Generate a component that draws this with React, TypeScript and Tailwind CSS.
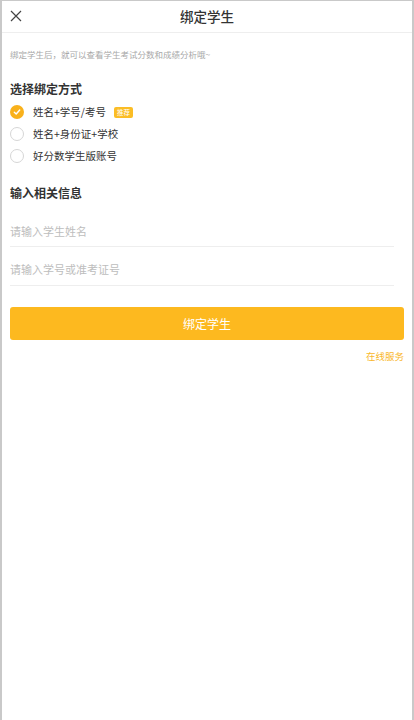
import { useState } from 'react';

const options = ['姓名+学号/考号', '姓名+身份证+学校', '好分数学生版账号'];

export default function App() {
  const [selected, setSelected] = useState(0);

  return (
    <div
      className="min-h-[720px] bg-white border-x-2 border-t border-[#c9c9c9] text-[#333]"
      style={{ fontFamily: '"Noto Sans CJK SC", "Noto Sans", sans-serif' }}
    >
      {/* Header */}
      <div className="relative h-[32px] flex items-center justify-center border-b border-[#eeeeee]">
        <button className="absolute left-[7px] top-[8px] w-[14px] h-[14px] flex items-center justify-center">
          <svg width="12" height="12" viewBox="0 0 12 12" fill="none" stroke="#444" strokeWidth="1.2">
            <path d="M1 1 L11 11 M11 1 L1 11" />
          </svg>
        </button>
        <h1 className="text-[13.5px] font-medium text-[#333] leading-none">绑定学生</h1>
      </div>

      <div className="px-[8px]">
        <p className="mt-[14px] text-[8.5px] text-[#a8a8a8] leading-[14px]">
          绑定学生后，就可以查看学生考试分数和成绩分析哦~
        </p>

        {/* Binding method */}
        <h2 className="mt-[20px] text-[12px] font-bold text-[#333] leading-[16px]">选择绑定方式</h2>
        <div className="mt-[7px] flex flex-col gap-[6px]">
          {options.map((label, i) => (
            <div key={label} className="flex items-center h-[16px]" onClick={() => setSelected(i)}>
              {selected === i ? (
                <span className="w-[14px] h-[14px] rounded-full bg-[#f9b11b] flex items-center justify-center">
                  <svg width="8" height="8" viewBox="0 0 8 8" fill="none" stroke="#fff" strokeWidth="1.4" strokeLinecap="round" strokeLinejoin="round">
                    <path d="M1.3 4.2 L3.2 6 L6.7 2" />
                  </svg>
                </span>
              ) : (
                <span className="w-[14px] h-[14px] rounded-full border border-[#d6d6d6]" />
              )}
              <span className="ml-[9px] text-[10.5px] text-[#333]">{label}</span>
              {i === 0 && (
                <span className="ml-[8px] px-[3px] h-[11px] rounded-[2px] bg-[#fbbd25] text-white text-[6.5px] leading-[11px]">
                  推荐
                </span>
              )}
            </div>
          ))}
        </div>

        {/* Info inputs */}
        <h2 className="mt-[21px] text-[12px] font-bold text-[#333] leading-[16px]">输入相关信息</h2>
        <div className="mr-[10px] mt-[8px]">
          <input
            className="w-full h-[38px] pt-[6px] border-b border-[#eeeeee] outline-none text-[11px] placeholder:text-[#bdbdbd]"
            placeholder="请输入学生姓名"
          />
          <input
            className="w-full h-[39px] pt-[6px] border-b border-[#eeeeee] outline-none text-[11px] placeholder:text-[#bdbdbd]"
            placeholder="请输入学号或准考证号"
          />
        </div>

        <button className="mt-[21px] w-full h-[33px] rounded-[3px] bg-[#fdb91f] text-white text-[12px]">
          绑定学生
        </button>
        <div className="mt-[9px] flex justify-end">
          <span className="text-[9.5px] text-[#f9b72b]">在线服务</span>
        </div>
      </div>
    </div>
  );
}
